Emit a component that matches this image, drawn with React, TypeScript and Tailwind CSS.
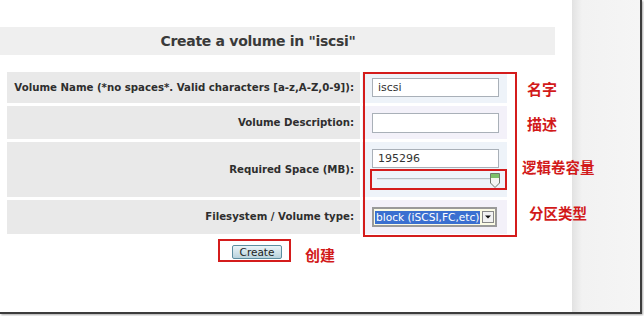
import React from "react";

const rows = [
  { label: "Volume Name (*no spaces*. Valid characters [a-z,A-Z,0-9]):", h: "h-[31px]", tint: "bg-[#eef3f9]" },
  { label: "Volume Description:", h: "h-[33px]", tint: "bg-[#f3f1f9]" },
  { label: "Required Space (MB):", h: "h-[55px]", tint: "bg-[#eef3f9]" },
  { label: "Filesystem / Volume type:", h: "h-[34px]", tint: "bg-[#f3f1f9]" },
];

function SliderThumb() {
  return (
    <svg width="12" height="17" viewBox="0 0 12 17" className="absolute left-[117px] top-[2px]">
      <path d="M1.5 1.5 H10.5 V11 L6 15.5 L1.5 11 Z" fill="#f4f6f2" stroke="#6f7a6a" strokeWidth="1" />
      <rect x="2" y="2" width="8" height="4" fill="#7cc06a" />
    </svg>
  );
}

function Field({ i }: { i: number }) {
  if (i === 0)
    return (
      <div className="w-[127px] h-[19px] border border-[#a9b0b8] bg-white px-[5px] text-[11px] leading-[17px] text-[#333]">
        iscsi
      </div>
    );
  if (i === 1) return <div className="w-[127px] h-[20px] border border-[#a9b0b8] bg-white" />;
  if (i === 2)
    return (
      <div className="flex flex-col">
        <div className="w-[127px] h-[19px] border border-[#a9b0b8] bg-white px-[5px] text-[11px] leading-[17px] text-[#333]">
          195296
        </div>
        <div className="relative w-[130px] h-[21px] mt-[2px]">
          <div className="absolute left-[5px] top-[8px] w-[116px] h-[2px] bg-[#b9bec4] border-b border-[#e4e7ea]" />
          <SliderThumb />
        </div>
      </div>
    );
  return (
    <div className="flex items-center w-[125px] h-[20px] border-2 border-[#9a9a9a] bg-[#fbfbe4] pl-[1px] pr-[1px]">
      <span className="bg-[#3a6fd0] text-white text-[10.6px] leading-[13px] px-[1px] whitespace-nowrap">
        block (iSCSI,FC,etc)
      </span>
      <span className="ml-auto flex items-center justify-center w-[12px] h-[12px] border border-[#888] bg-[#f2f2f2] shrink-0">
        <svg width="6" height="4" viewBox="0 0 6 4"><path d="M0 0.5 H6 L3 3.5 Z" fill="#111" /></svg>
      </span>
    </div>
  );
}

export default function App() {
  const cjk = { fontFamily: '"Noto Sans CJK SC", sans-serif' };
  return (
    <div className="w-[644px] h-[316px] bg-white overflow-hidden" style={{ fontFamily: '"DejaVu Sans", Verdana, sans-serif' }}>
      <div className="relative flex w-[642px] h-[314px] border-r-2 border-b-2 border-[#3c3c3c] shadow-[1px_1px_2px_rgba(0,0,0,0.35)]">
        <div className="w-[572px] pt-[27px]">
          <div className="w-[555px] h-[28px] bg-[#efefef] flex items-center">
            <div className="w-[516px] text-center text-[14px] font-bold text-[#3a3a3a] tracking-[-0.3px]">
              Create a volume in "iscsi"
            </div>
          </div>
          <div className="mt-[17px] ml-[7px] flex flex-col gap-[3px] w-[500px]">
            {rows.map((r, i) => (
              <div key={i} className={`flex gap-[2px] ${r.h}`}>
                <div className="w-[353px] bg-[#e9e9e9] flex items-center justify-end pr-[6px] text-[10.2px] font-bold text-[#2e2e2e] whitespace-nowrap">
                  {r.label}
                </div>
                <div className={`flex-1 ${r.tint} flex items-center pl-[10px]`}>
                  <Field i={i} />
                </div>
              </div>
            ))}
          </div>
          <div className="w-[500px] ml-[7px] flex justify-center mt-[11px]">
            <button className="w-[50px] h-[14px] rounded-[2px] border border-[#5c8ea0] bg-gradient-to-b from-[#eaf4f8] to-[#b9d3dd] text-[10.5px] leading-[12px] text-[#222]">
              Create
            </button>
          </div>
        </div>
        <div className="w-[68px] bg-[linear-gradient(to_right,#e2e2e2,#f2f2f2_10px,#f5f5f5)]" />

        {/* annotations */}
        <div className="absolute left-[363px] top-[72px] w-[154px] h-[165px] border-2 border-[#d41c1c]" />
        <div className="absolute left-[370px] top-[169px] w-[137px] h-[21px] border-2 border-[#d41c1c]" />
        <div className="absolute left-[218px] top-[239px] w-[73px] h-[23px] border-2 border-[#d41c1c]" />
        <div style={cjk} className="absolute left-[527px] top-[78px] text-[15px] font-bold text-[#d21a1a]">名字</div>
        <div style={cjk} className="absolute left-[527px] top-[113px] text-[15px] font-bold text-[#d21a1a]">描述</div>
        <div style={cjk} className="absolute left-[522px] top-[156px] text-[14.5px] font-bold text-[#d21a1a]">逻辑卷容量</div>
        <div style={cjk} className="absolute left-[529px] top-[202px] text-[14.5px] font-bold text-[#d21a1a]">分区类型</div>
        <div style={cjk} className="absolute left-[305px] top-[244px] text-[15px] font-bold text-[#d21a1a]">创建</div>
      </div>
    </div>
  );
}
